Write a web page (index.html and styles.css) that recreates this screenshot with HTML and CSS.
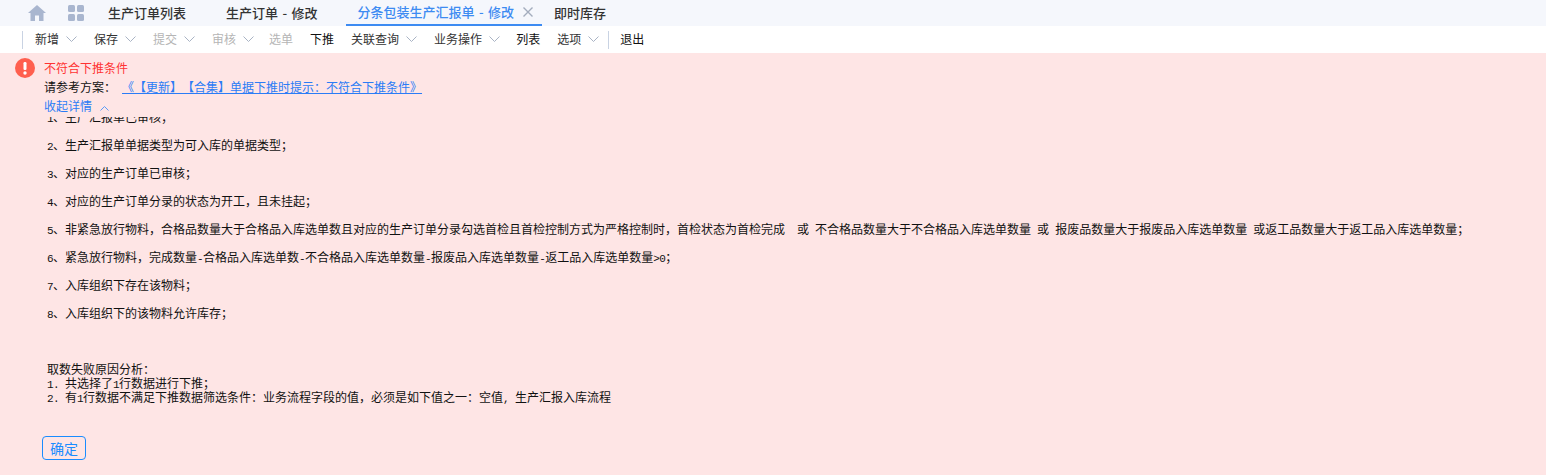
FILE: index.html
```html
<!DOCTYPE html>
<html lang="zh-CN">
<head>
  <meta charset="UTF-8" />
  <title>分条包装生产汇报单 - 修改</title>
  <link rel="stylesheet" href="styles.css">
</head>
<body>
  <header class="tabs">
    <svg class="tab-icon home-icon" viewBox="0 0 18 16" width="18" height="16"><path d="M9 0 L18 8 H15.5 V16 H11 V10.5 H7 V16 H2.5 V8 H0 Z" fill="#a9b6cf"/></svg>
    <svg class="tab-icon grid-icon" viewBox="0 0 16 16" width="16" height="16">
      <rect x="0" y="0" width="7" height="7" rx="1.5" fill="#a9b6cf"/>
      <rect x="9" y="0" width="7" height="7" rx="1.5" fill="#a9b6cf"/>
      <rect x="0" y="9" width="7" height="7" rx="1.5" fill="#a9b6cf"/>
      <rect x="9" y="9" width="7" height="7" rx="1.5" fill="#a9b6cf"/>
    </svg>
    <a class="tab tab-list">生产订单列表</a>
    <a class="tab tab-order">生产订单 - 修改</a>
    <a class="tab tab-active">分条包装生产汇报单 - 修改
      <svg class="tab-close" viewBox="0 0 10 10" width="10" height="10"><path d="M0.5 0.5 L9.5 9.5 M9.5 0.5 L0.5 9.5" stroke="#a3acbd" stroke-width="1.4"/></svg>
    </a>
    <a class="tab tab-stock">即时库存</a>
  </header>

  <nav class="toolbar">
    <span class="divider first"></span>
    <a class="tool">新增<svg class="caret" viewBox="0 0 11 6" width="11" height="6"><path d="M0.5 0.5 L5.5 5.5 L10.5 0.5" /></svg></a>
    <a class="tool">保存<svg class="caret" viewBox="0 0 11 6" width="11" height="6"><path d="M0.5 0.5 L5.5 5.5 L10.5 0.5" /></svg></a>
    <a class="tool disabled">提交<svg class="caret" viewBox="0 0 11 6" width="11" height="6"><path d="M0.5 0.5 L5.5 5.5 L10.5 0.5" /></svg></a>
    <a class="tool disabled tight">审核<svg class="caret" viewBox="0 0 11 6" width="11" height="6"><path d="M0.5 0.5 L5.5 5.5 L10.5 0.5" /></svg></a>
    <a class="tool disabled">选单</a>
    <a class="tool strong">下推</a>
    <a class="tool">关联查询<svg class="caret" viewBox="0 0 11 6" width="11" height="6"><path d="M0.5 0.5 L5.5 5.5 L10.5 0.5" /></svg></a>
    <a class="tool tight">业务操作<svg class="caret" viewBox="0 0 11 6" width="11" height="6"><path d="M0.5 0.5 L5.5 5.5 L10.5 0.5" /></svg></a>
    <a class="tool strong">列表</a>
    <a class="tool last">选项<svg class="caret" viewBox="0 0 11 6" width="11" height="6"><path d="M0.5 0.5 L5.5 5.5 L10.5 0.5" /></svg></a>
    <span class="divider"></span>
    <a class="tool strong">退出</a>
  </nav>

  <main class="alert">
    <div class="alert-head">
      <svg class="alert-icon" viewBox="0 0 20 20" width="20" height="20">
        <circle cx="10" cy="10" r="10" fill="#ff5f4e"/>
        <rect x="8.5" y="4" width="3" height="8" rx="1.2" fill="#fff"/>
        <circle cx="10" cy="15" r="1.7" fill="#fff"/>
      </svg>
      <div class="alert-text">
        <p class="alert-title">不符合下推条件</p>
        <p class="alert-ref">请参考方案：<a class="ref-link">《【更新】【合集】单据下推时提示：不符合下推条件》</a></p>
        <p class="alert-toggle">收起详情<svg class="toggle-caret" viewBox="0 0 9 5" width="9" height="5"><path d="M0.5 4.5 L4.5 0.5 L8.5 4.5" /></svg></p>
      </div>
    </div>
    <div class="detail">
      <div class="detail-inner">
        <span class="num">1</span>、生产汇报单已审核；<br><br>
        <span class="num">2</span>、生产汇报单单据类型为可入库的单据类型；<br><br>
        <span class="num">3</span>、对应的生产订单已审核；<br><br>
        <span class="num">4</span>、对应的生产订单分录的状态为开工，且未挂起；<br><br>
        <span class="num">5</span>、非紧急放行物料，合格品数量大于合格品入库选单数且对应的生产订单分录勾选首检且首检控制方式为严格控制时，首检状态为首检完成<span class="num">&nbsp;&nbsp;</span>或<span class="num">&nbsp;</span>不合格品数量大于不合格品入库选单数量<span class="num">&nbsp;</span>或<span class="num">&nbsp;</span>报废品数量大于报废品入库选单数量<span class="num">&nbsp;</span>或返工品数量大于返工品入库选单数量；<br><br>
        <span class="num">6</span>、紧急放行物料，完成数量<span class="num">-</span>合格品入库选单数<span class="num">-</span>不合格品入库选单数量<span class="num">-</span>报废品入库选单数量<span class="num">-</span>返工品入库选单数量<span class="num">&gt;0</span>；<br><br>
        <span class="num">7</span>、入库组织下存在该物料；<br><br>
        <span class="num">8</span>、入库组织下的该物料允许库存；<br><br><br><br>
        取数失败原因分析：<br>
        <span class="num">1.&nbsp;</span>共选择了<span class="num">1</span>行数据进行下推；<br>
        <span class="num">2.&nbsp;</span>有<span class="num">1</span>行数据不满足下推数据筛选条件：业务流程字段的值，必须是如下值之一：空值<span class="num">,&nbsp;</span>生产汇报入库流程
      </div>
    </div>
    <button class="confirm">确定</button>
  </main>
</body>
</html>
```

FILE: styles.css
```css
* {
  margin: 0;
  padding: 0;
  box-sizing: border-box;
}

body {
  width: 1546px;
  height: 475px;
  overflow: hidden;
  font-family: "Noto Sans CJK SC", "Liberation Sans", sans-serif;
  font-size: 12px;
  color: #333;
  background: #fee5e5;
}

.tabs {
  display: flex;
  align-items: center;
  height: 26px;
  background: #f5f7fc;
}

.home-icon {
  margin-left: 28px;
}

.grid-icon {
  margin-left: 22px;
}

.tab {
  font-size: 13px;
  font-weight: 500;
  line-height: 26px;
  color: #333;
  white-space: pre;
  word-spacing: 1.5px;
}

.tab-list {
  margin-left: 24px;
}

.tab-order {
  margin-left: 40px;
}

.tab-active {
  display: flex;
  align-items: center;
  height: 26px;
  margin-left: 28px;
  padding: 0 9px 0 12px;
  color: #3d8bf2;
  border-bottom: 2px solid #3d8bf2;
  white-space: normal;
}

.tab-close {
  margin-left: 9px;
}

.tab-stock {
  margin-left: 12px;
}

.toolbar {
  display: flex;
  align-items: center;
  height: 27px;
  padding-left: 22px;
  background: #fff;
}

.divider {
  width: 1px;
  height: 18px;
  background: #c9d3e3;
  margin: 0 11px 0 0;
}

.divider.first {
  margin-right: 12px;
}

.tool {
  display: flex;
  align-items: center;
  margin-right: 17px;
  margin-bottom: 2px;
  color: #333;
  white-space: nowrap;
}

.tool.tight {
  margin-right: 16px;
}

.tool.disabled.tight {
  margin-right: 15px;
}

.tool.last {
  margin-right: 9px;
}

.tool.strong {
  color: #111;
}

.tool.disabled {
  color: #b5b5b5;
}

.caret {
  margin-left: 7px;
  fill: none;
  stroke: #a9b3c4;
}

.alert {
  height: 422px;
  background: #fee5e5;
}

.alert-head {
  display: flex;
  padding: 5px 0 0 15px;
  height: 64px;
}

.alert-icon {
  margin-right: 9px;
  flex: none;
}

.alert-text {
  line-height: 19px;
}

.alert-title {
  color: #ff3333;
}

.alert-ref {
  color: #111;
}

.ref-link {
  margin-left: 6px;
  color: #2b7cf6;
  text-decoration: underline;
  text-spacing-trim: space-all;
}

.alert-toggle {
  color: #2b7cf6;
}

.toggle-caret {
  margin-left: 8px;
  fill: none;
  stroke: #5a9bf6;
}

.detail {
  height: 287px;
  padding-left: 47px;
  overflow: hidden;
}

.detail-inner {
  margin-top: -7px;
  font-size: 12px;
  line-height: 14px;
  color: #111;
  white-space: nowrap;
  text-spacing-trim: space-all;
}

.num {
  font-family: "Liberation Mono", monospace;
  font-size: 11px;
  letter-spacing: -0.6px;
  line-height: 0;
}

.confirm {
  display: block;
  width: 44px;
  height: 24px;
  margin: 32px 0 0 42px;
  font-family: inherit;
  font-size: 14px;
  line-height: 20px;
  color: #1a8cff;
  background: transparent;
  border: 1px solid #1a8cff;
  border-radius: 4px;
}
```
